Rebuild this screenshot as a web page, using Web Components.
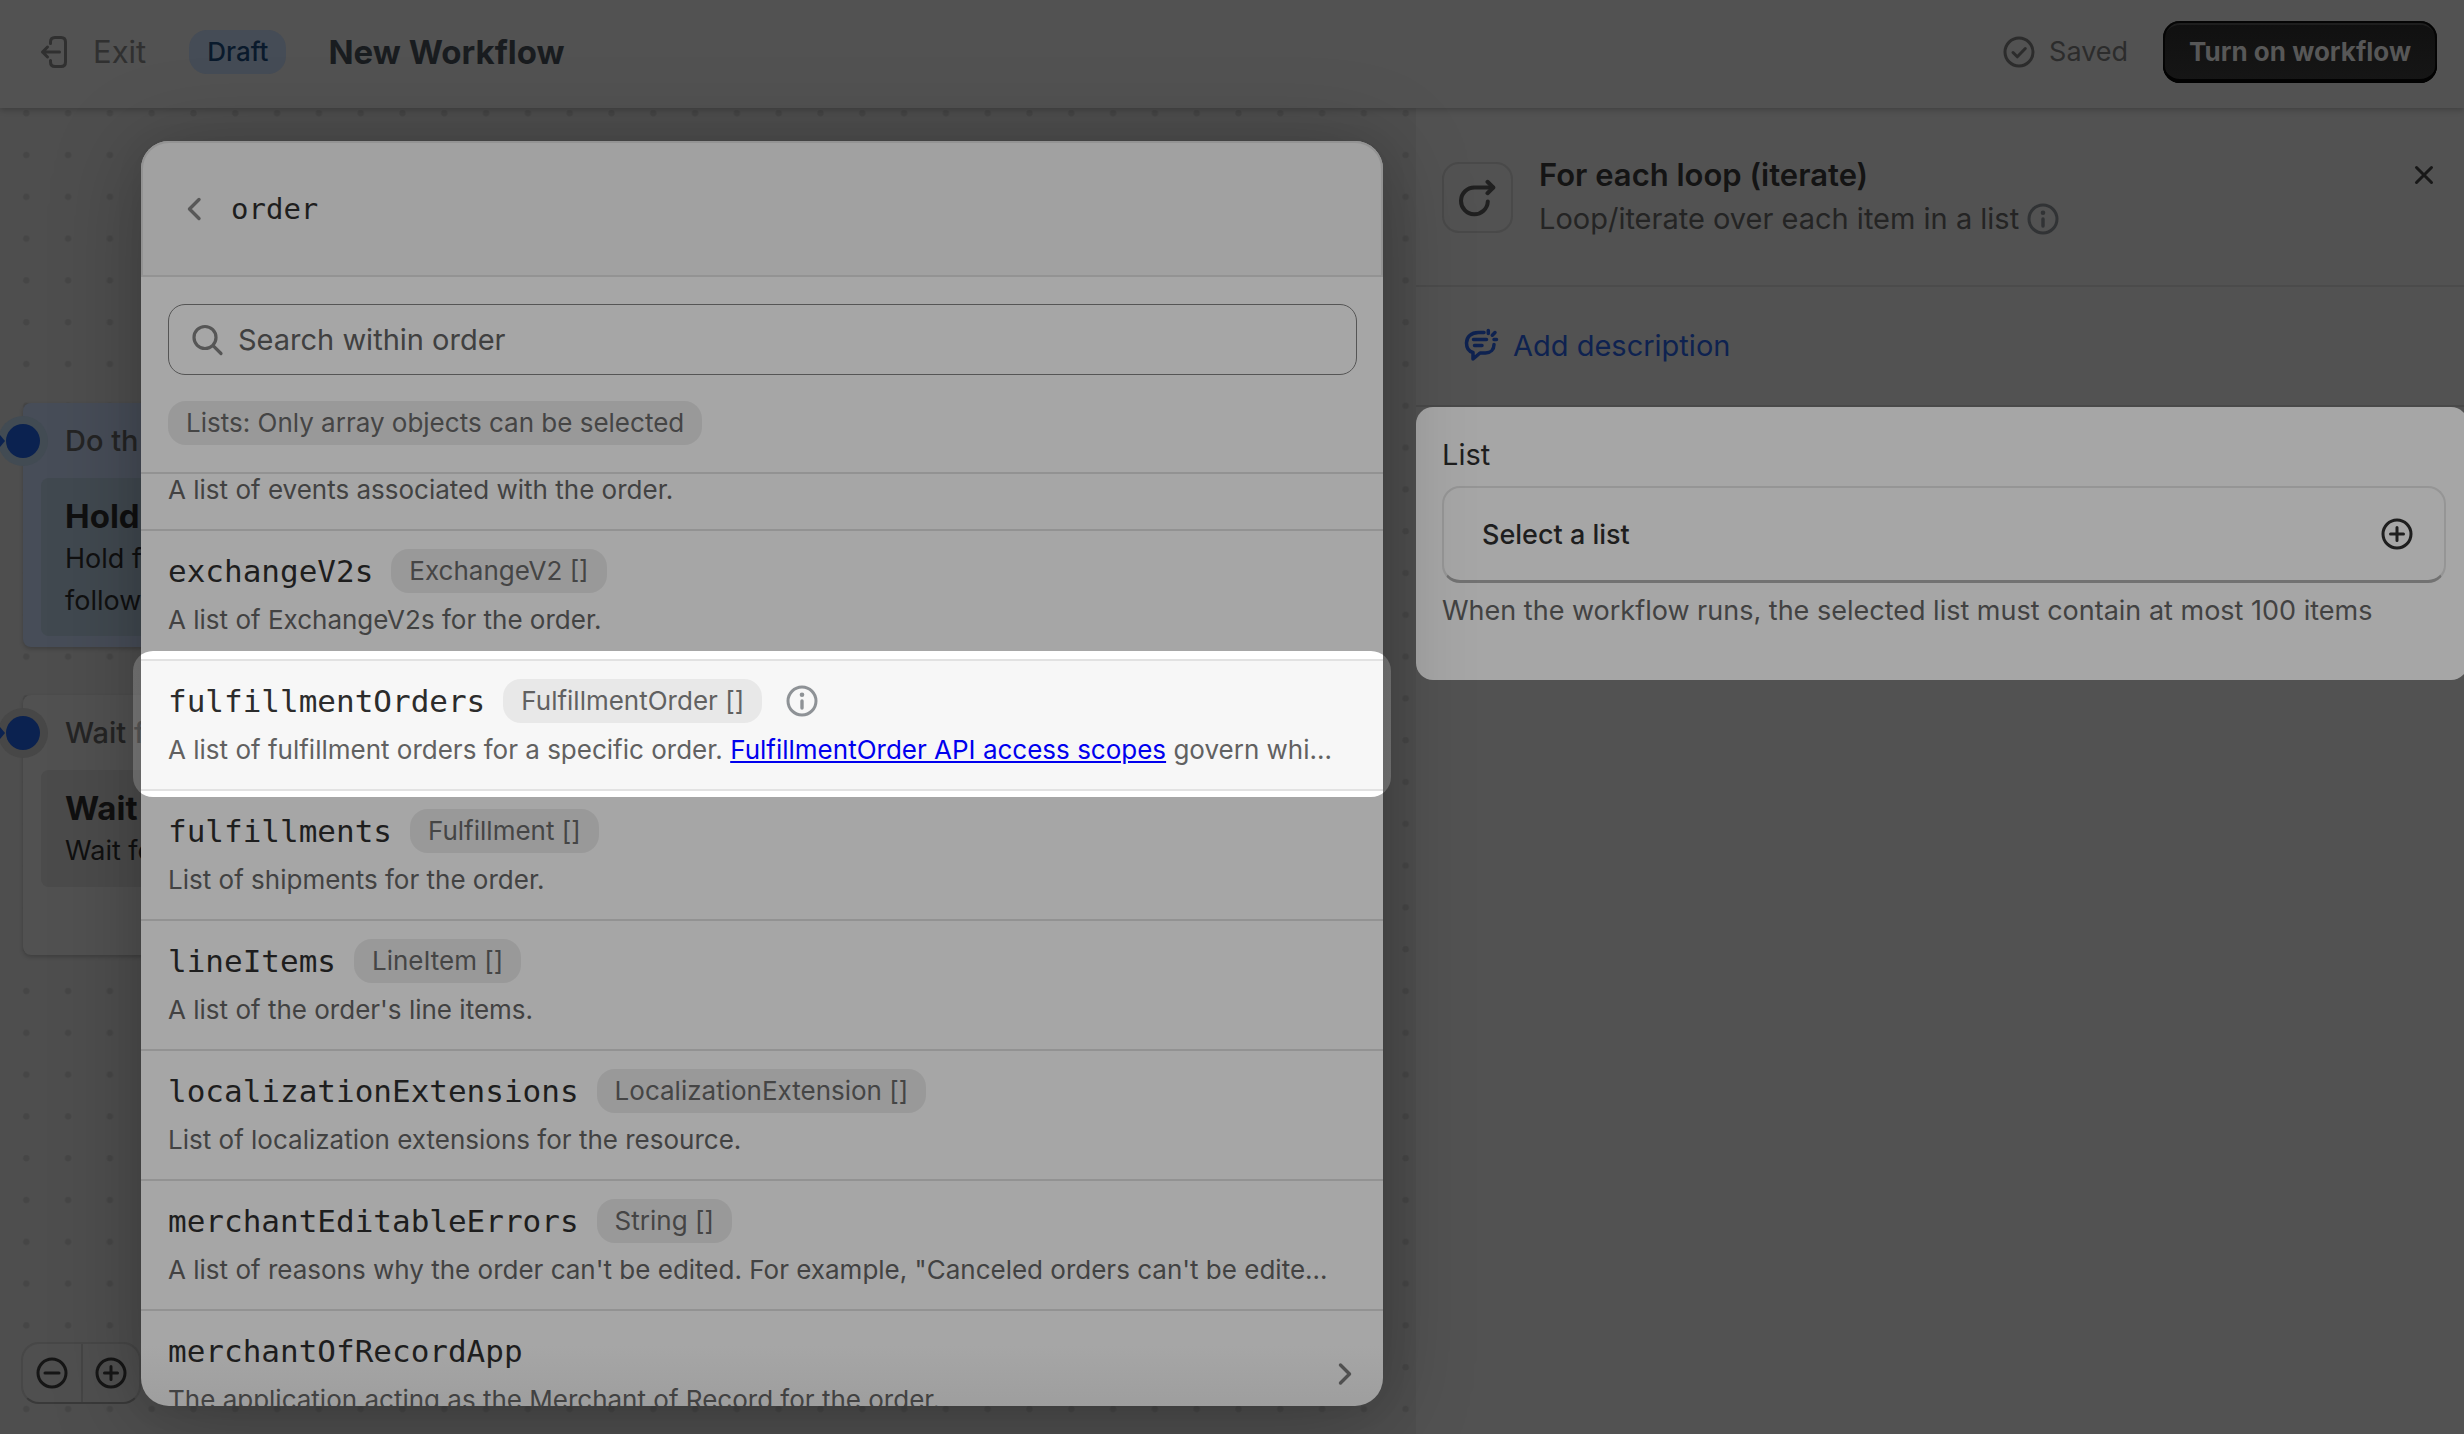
<!DOCTYPE html>
<html lang="en">
<head>
<meta charset="utf-8">
<title>New Workflow</title>
<style>
  html, body { margin: 0; height: 100%; }
  body { background: #525252; font-family: Inter, "Liberation Sans", sans-serif; color: #1f1f1f; overflow: hidden; }
</style>
</head>
<body>
<workflow-app></workflow-app>
<script>
const ICONS = {
  exit: ['0 0 28 34', 28, 34, '<g stroke-width="3"><path d="M10.500 8.500V7c0-3 1.500-4.500 4.500-4.500h6c3 0 4.500 1.500 4.500 4.500v20c0 3-1.500 4.500-4.500 4.500h-6c-3 0-4.500-1.500-4.500-4.500v-1.500"/><path d="M2.500 17H19.500M7.500 12l-5 5 5 5"/></g>'],
  check: ['0 0 32 32', 32, 32, '<g stroke-width="3"><circle cx="16" cy="16" r="14"/><path d="M10 16.500l4.300 4.300 8-8.300"/></g>'],
  info: ['0 0 32 32', 32, 32, '<g stroke-width="3"><circle cx="16" cy="16" r="14"/><path d="M16 16v7" stroke-width="3.400"/></g><circle cx="16" cy="9.800" r="2.300" fill="currentColor" stroke="none"/>'],
  plus: ['0 0 32 32', 32, 32, '<g stroke-width="3"><circle cx="16" cy="16" r="14"/><path d="M16 9.500v13M9.500 16h13"/></g>'],
  minus: ['0 0 32 32', 32, 32, '<g stroke-width="3"><circle cx="16" cy="16" r="14"/><path d="M9 16h14"/></g>'],
  close: ['0 0 20 20', 20, 20, '<path stroke-width="3" d="M2.500 2.500l15 15M17.500 2.500l-15 15"/>'],
  back: ['0 0 16 24', 16, 24, '<path stroke-width="3.400" d="M13 2.500L3.500 12 13 21.500"/>'],
  next: ['0 0 24 24', 24, 24, '<path stroke-width="3.400" d="M7.500 3l9 9-9 9"/>'],
  search: ['0 0 32 32', 32, 32, '<g stroke-width="3.200"><circle cx="13" cy="13.500" r="11"/><path d="M21.300 21.800l7.700 7.700"/></g>'],
  loop: ['0 0 38 38', 38, 38, '<g stroke-width="4"><path d="M28.800 22.500A13.400 13.400 0 1 1 15.500 8.500H34"/><path d="M28.500 2.800l5.800 5.700-5.800 5.700"/></g>'],
  note: ['0 0 36 34', 36, 34, '<g stroke-width="3.500"><path d="M21 4.500H15.500C8 4.500 3.500 9 3.500 15c0 5 2.500 8.500 6.500 9.500v6.500l7-6h5.500c5 0 8.500-3.500 8.500-8.500"/><path d="M10.500 11.500h13M11.500 17.500h7.500M25.300 2.500v3M32 4.500l-2.700 2.700M31 11.500h2.500"/></g>']
};
const icon = (name) => {
  const [box, w, h, body] = ICONS[name];
  return `<svg viewBox="${box}" width="${w}" height="${h}" fill="none" stroke="currentColor" stroke-linecap="round" stroke-linejoin="round" aria-hidden="true">${body}</svg>`;
};
const BASE = `<style>
  *, *::before, *::after { box-sizing: border-box; }
  svg { display: block; flex: none; }
  button { font: inherit; color: inherit; background: none; border: 0; margin: 0; padding: 0; cursor: pointer; }
  h1, h2, h3, p, ul { margin: 0; padding: 0; font-weight: inherit; }
</style>`;
const define = (name, render) => customElements.define(name, class extends HTMLElement {
  constructor() { super(); this.attachShadow({ mode: 'open' }); }
  connectedCallback() { this.shadowRoot.innerHTML = BASE + render(this); }
});

define('type-badge', () => `<style>
  :host { display: inline-flex; align-items: center; height: 44px; padding: 0 18px; border-radius: 18px;
    background: var(--badge-bg, #999999); color: var(--badge-fg, #454545); font-size: 26px; line-height: 44px; white-space: nowrap; }
</style><slot></slot>`);

define('app-header', () => `<style>
  :host { display: flex; align-items: center; height: 108px; padding: 0 27px 5px 40px; background: #525252;
    box-shadow: 0 2px 6px rgba(0,0,0,.22); position: relative; z-index: 1; }
  .exit { display: flex; align-items: center; gap: 25px; color: #303030; font-size: 31px; margin-right: 43px; }
  type-badge { --badge-bg: #454c56; --badge-fg: #0a1a2c; font-weight: 500; margin-right: 42px; }
  h1 { font-size: 33px; font-weight: 700; line-height: 40px; color: #191c1f; }
  .saved { display: flex; align-items: center; gap: 14px; margin-left: auto; margin-right: 35px; font-size: 27px; color: #2c2c2c; }
  .on { height: 62px; padding: 0 26px; border-radius: 17px; background: linear-gradient(#101010, #161616); color: #575757;
    font-size: 26px; font-weight: 700; box-shadow: inset 0 -4px 0 #020202, inset 0 0 0 2px #050505, inset 0 4px 0 #1e1e1e; }
</style>
<button class="exit">${icon('exit')}<span>Exit</span></button>
<type-badge>Draft</type-badge>
<h1>New Workflow</h1>
<div class="saved">${icon('check')}<span>Saved</span></div>
<button class="on">Turn on workflow</button>`);

define('step-card', (el) => `<style>
  :host { display: block; position: absolute; left: 23px; width: 560px; border-radius: 8px; padding: 0 18px 11px;
    background: var(--card, #515151); box-shadow: 0 2px 4px rgba(0,0,0,.2); color: #101010; }
  h2 { height: 75px; padding: 15px 24px 0; font-size: 29px; line-height: 46px; font-weight: 500; color: #242424; }
  .body { padding: 16px 24px 14px; min-height: 117px; border-radius: 8px; background: var(--inner, #4b4b4b); }
  h3 { font-size: 33px; line-height: 44px; font-weight: 700; }
  p { font-size: 27px; line-height: 42px; white-space: pre-line; }
  .port { position: absolute; left: -25px; top: 13px; width: 50px; height: 50px; border-radius: 50%; background: var(--halo, #474747); }
  .port::before { content: ""; position: absolute; inset: 8px; border-radius: 50%; background: #0b2250; }
  .arrow { position: absolute; left: -23px; top: 32px; color: #0b2250; }
</style>
<span class="port"></span>
<svg class="arrow" width="5" height="12" viewBox="0 0 5 12" aria-hidden="true"><path d="M0 0l5 6-5 6z" fill="currentColor"/></svg>
<h2>${el.getAttribute('heading')}</h2>
<div class="body"><h3>${el.getAttribute('action')}</h3><p><slot></slot></p></div>`);

define('zoom-controls', () => `<style>
  :host { display: flex; position: absolute; left: 21px; bottom: 30px; height: 62px; border-radius: 18px; background: #4f4f4f;
    border: 2px solid #474747; border-bottom-color: #393939; color: #161616; }
  button { width: 58px; display: grid; place-items: center; }
  button + button { border-left: 2px solid #454545; }
</style>
<button aria-label="Zoom out">${icon('minus')}</button><button aria-label="Zoom in">${icon('plus')}</button>`);

define('field-row', (el) => `<style>
  :host { display: flex; align-items: center; gap: 24px; height: 130px; padding: 0 26px 3px 27px; border-top: 2px solid #929292; position: relative; flex: none; }
  :host([partial]) { height: 55px; border-top: 0; align-items: flex-end; padding-bottom: 21px; }
  :host([active]) { height: 132px; margin-bottom: -2px; border-color: #e2e2e2; border-bottom: 2px solid #e2e2e2; background: #f7f7f7; z-index: 1;
    --badge-bg: #e8e8e8; --badge-fg: #616161; }
  :host([active])::before { content: ""; position: absolute; z-index: -1; inset: -10px -8px -8px; border-radius: 20px;
    background: linear-gradient(90deg, rgba(255,255,255,.2) 8px, #ffffff 8px, #ffffff calc(100% - 8px), rgba(255,255,255,.2) calc(100% - 8px)); }
  :host([active])::after { content: ""; position: absolute; z-index: -1; inset: -2px 0; background: #f7f7f7; border: solid #e2e2e2; border-width: 2px 0; }
  .text { flex: 1; min-width: 0; display: flex; flex-direction: column; gap: 9px; }
  .name { display: flex; align-items: center; gap: 18px; height: 44px; font: 31px/44px "DejaVu Sans Mono", monospace; color: #1e1e1e; }
  :host([active]) .name { color: #2c2c2c; }
  type-badge { font-family: Inter, "Liberation Sans", sans-serif; }
  .name svg { color: #8e9296; margin-left: 6px; }
  p { padding-right: 20px; font-size: 26px; line-height: 36px; color: #424242; overflow: hidden; white-space: nowrap; text-overflow: ellipsis; }
  :host([active]) p { color: #616161; }
  ::slotted(a) { color: #0000ee; text-decoration: underline; }
  .next { color: #505050; }
</style>
<div class="text">
  ${el.hasAttribute('name') ? `<div class="name"><span>${el.getAttribute('name')}</span>${el.hasAttribute('type') ? `<type-badge>${el.getAttribute('type')} []</type-badge>` : ''}${el.hasAttribute('active') ? icon('info') : ''}</div>` : ''}
  <p><slot></slot></p>
</div>
${el.hasAttribute('nested') ? `<button class="next" aria-label="Open">${icon('next')}</button>` : ''}`);

define('picker-dialog', () => `<style>
  :host { display: flex; flex-direction: column; position: absolute; inset: 33px 33px 28px 141px; z-index: 2; border-radius: 28px;
    background: linear-gradient(#a6a6a6 calc(100% - 60px), #9e9e9e); box-shadow: 0 10px 90px rgba(0,0,0,.26), 0 4px 30px rgba(0,0,0,.06); }
  header { display: flex; align-items: center; gap: 29px; height: 136px; padding: 0 43px; flex: none; background: #a1a1a1;
    border: 2px solid #939393; border-radius: 28px 28px 0 0; color: #585858; }
  header h2 { font: 29px/40px "DejaVu Sans Mono", monospace; color: #1e1e1e; }
  .tools { display: flex; flex-direction: column; align-items: flex-start; gap: 26px; padding: 27px 26px 27px 27px; border-bottom: 2px solid #929292; flex: none; }
  label { display: flex; align-items: center; gap: 14px; align-self: stretch; height: 71px; padding: 0 23px; border: 1px solid #555555; border-radius: 17px; color: #565656; }
  input { flex: 1; min-width: 0; border: 0; outline: 0; padding: 0; background: none; font: 29px/40px Inter, "Liberation Sans", sans-serif; color: #1e1e1e; }
  input::placeholder { color: #404040; opacity: 1; }
  .list { flex: 1; min-height: 0; display: flex; flex-direction: column; overflow-y: clip; overflow-x: visible; }
</style>
<header><button aria-label="Back">${icon('back')}</button><h2>order</h2></header>
<div class="tools">
  <label>${icon('search')}<input type="text" placeholder="Search within order" aria-label="Search within order"></label>
  <type-badge>Lists: Only array objects can be selected</type-badge>
</div>
<div class="list">
  <field-row partial>A list of events associated with the order.</field-row>
  <field-row name="exchangeV2s" type="ExchangeV2">A list of ExchangeV2s for the order.</field-row>
  <field-row name="fulfillmentOrders" type="FulfillmentOrder" active>A list of fulfillment orders for a specific order. <a href="#scopes">FulfillmentOrder API access scopes</a> govern which orders are returned.</field-row>
  <field-row name="fulfillments" type="Fulfillment">List of shipments for the order.</field-row>
  <field-row name="lineItems" type="LineItem">A list of the order's line items.</field-row>
  <field-row name="localizationExtensions" type="LocalizationExtension">List of localization extensions for the resource.</field-row>
  <field-row name="merchantEditableErrors" type="String">A list of reasons why the order can't be edited. For example, "Canceled orders can't be edited".</field-row>
  <field-row name="merchantOfRecordApp" nested>The application acting as the Merchant of Record for the order.</field-row>
</div>`);

define('workflow-canvas', () => `<style>
  :host { display: block; position: relative; background: #4e4e4e; min-height: 0; }
  .dots { position: absolute; inset: 0; width: 100%; height: 100%; }
  .hold { top: 295px; --card: #474d58; --inner: #414950; --halo: #424b53; }
  .wait { top: 587px; min-height: 260px; }
</style>
<svg class="dots" aria-hidden="true"><defs><pattern id="d" width="41.800" height="41.800" patternUnits="userSpaceOnUse"><circle cx="26.300" cy="5.300" r="3.200" fill="#464646"/></pattern></defs><rect width="100%" height="100%" fill="url(#d)"/></svg>
<step-card class="hold" heading="Do th" action="Hold">Hold f
follow</step-card>
<step-card class="wait" heading="Wait f" action="Wait">Wait fo</step-card>
<zoom-controls></zoom-controls>
<picker-dialog></picker-dialog>`);

define('step-panel', () => `<style>
  :host { display: flex; flex-direction: column; background: #525252; box-shadow: 0 0 4px rgba(0,0,0,.25); }
  header { display: flex; align-items: flex-start; gap: 26px; height: 179px; padding: 46px 30px 0 26px; border-bottom: 2px solid #4b4b4b; }
  .tile { display: grid; place-items: center; width: 71px; height: 71px; margin-top: 8px; border: 2px solid #494949; border-radius: 17px; color: #202020; }
  .title { flex: 1; }
  h2 { font-size: 31px; font-weight: 600; line-height: 42px; color: #141414; }
  .sub { display: flex; align-items: center; gap: 8px; font-size: 29px; line-height: 46px; color: #242424; }
  .sub svg { color: #313335; }
  .close { margin-top: 11px; color: #181818; }
  .describe { display: flex; align-items: center; height: 120px; padding: 0 47px 2px; border-bottom: 2px solid #494949; }
  .describe button { display: flex; align-items: center; gap: 14px; font-size: 29px; color: #0e2250; }
  .card { margin-right: -4px; height: 273px; padding: 26px 22px 0 26px; border-radius: 17px; background: #a6a6a6; }
  .card label { display: block; font-size: 29px; line-height: 44px; color: #1e1e1e; }
  .pick { display: flex; align-items: center; justify-content: space-between; width: 100%; height: 97px; margin: 9px 0 8px; padding: 0 31px 0 38px;
    border: 2px solid #959595; border-bottom: 3px solid #727272; border-radius: 18px; font-size: 27px; font-weight: 500; color: #1e1e1e; }
  .card p { font-size: 27px; line-height: 40px; color: #424242; }
  .wrap { overflow-x: clip; }
</style>
<header><span class="tile">${icon('loop')}</span>
  <div class="title"><h2>For each loop (iterate)</h2><div class="sub"><span>Loop/iterate over each item in a list</span>${icon('info')}</div></div>
  <button class="close" aria-label="Close">${icon('close')}</button></header>
<div class="describe"><button>${icon('note')}<span>Add description</span></button></div>
<div class="wrap"><div class="card"><label for="pick">List</label>
  <button class="pick" id="pick"><span>Select a list</span>${icon('plus')}</button>
  <p>When the workflow runs, the selected list must contain at most 100 items</p></div></div>`);

define('workflow-app', () => `<style>
  :host { display: flex; flex-direction: column; height: 100vh; }
  main { flex: 1; min-height: 0; display: grid; grid-template-columns: minmax(0, 1416fr) minmax(0, 1048fr); }
</style>
<app-header></app-header>
<main><workflow-canvas></workflow-canvas><step-panel></step-panel></main>`);
</script>
</body>
</html>
